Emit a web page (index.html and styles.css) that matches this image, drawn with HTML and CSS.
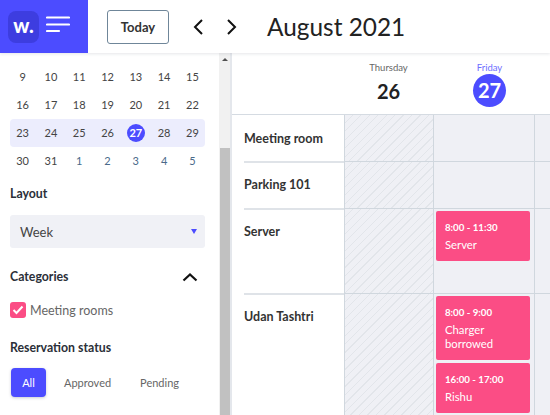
FILE: index.html
```html
<!DOCTYPE html>
<html lang="en">
<head>
    <meta charset="UTF-8">
    <title>Calendar</title>
    <link rel="stylesheet" href="styles.css">
</head>
<body>
    <header class="topbar">
        <div class="brand">
            <div class="logo">w.</div>
            <svg class="burger" width="24" height="18" viewBox="0 0 24 18">
                <path d="M1 1.500H23M1 8.500H23M1 15H13" stroke="#fff" stroke-width="2.200" stroke-linecap="round" fill="none"/>
            </svg>
        </div>
        <div class="topnav">
            <button class="today">Today</button>
            <svg class="arrow" width="12" height="18" viewBox="0 0 12 18"><path d="M10 2L3 9L10 16" stroke="#111" stroke-width="2" fill="none"/></svg>
            <svg class="arrow" width="12" height="18" viewBox="0 0 12 18"><path d="M2 2L9 9L2 16" stroke="#111" stroke-width="2" fill="none"/></svg>
            <h1 class="month">August 2021</h1>
        </div>
    </header>

    <div class="main">
        <aside class="sidebar">
            <div class="side-content">
                <div class="cal-row">
                    <span>9</span><span>10</span><span>11</span><span>12</span><span>13</span><span>14</span><span>15</span>
                </div>
                <div class="cal-row">
                    <span>16</span><span>17</span><span>18</span><span>19</span><span>20</span><span>21</span><span>22</span>
                </div>
                <div class="cal-row current">
                    <span>23</span><span>24</span><span>25</span><span>26</span><span><b class="today-dot">27</b></span><span>28</span><span>29</span>
                </div>
                <div class="cal-row">
                    <span>30</span><span>31</span><span class="next">1</span><span class="next">2</span><span class="next">3</span><span class="next">4</span><span class="next">5</span>
                </div>

                <h3 class="side-title layout-title">Layout</h3>
                <div class="select">
                    <span>Week</span>
                    <i class="caret"></i>
                </div>

                <div class="cat-head">
                    <h3 class="side-title">Categories</h3>
                    <svg width="16" height="10" viewBox="0 0 16 10"><path d="M1.500 8.500L8 2.500L14.500 8.500" stroke="#111" stroke-width="2.200" fill="none"/></svg>
                </div>
                <div class="check-row">
                    <span class="check">
                        <svg width="12" height="10" viewBox="0 0 12 10"><path d="M1.500 5L4.500 8L10.500 1.500" stroke="#fff" stroke-width="2" fill="none"/></svg>
                    </span>
                    Meeting rooms
                </div>

                <h3 class="side-title status-title">Reservation status</h3>
                <div class="tabs">
                    <span class="tab active">All</span>
                    <span class="tab">Approved</span>
                    <span class="tab">Pending</span>
                </div>
            </div>
            <div class="scrollbar">
                <div class="scroll-up"></div>
                <div class="scroll-thumb"></div>
            </div>
        </aside>

        <section class="schedule">
            <div class="days">
                <div class="corner"></div>
                <div class="day">
                    <small>Thursday</small>
                    <strong>26</strong>
                </div>
                <div class="day friday">
                    <small>Friday</small>
                    <strong>27</strong>
                </div>
                <div class="day-rest"></div>
            </div>

            <div class="row row-first">
                <div class="room">Meeting room</div>
                <div class="cell hatched"></div>
                <div class="cell"></div>
                <div class="cell rest"></div>
            </div>
            <div class="row row-s">
                <div class="room">Parking 101</div>
                <div class="cell hatched"></div>
                <div class="cell"></div>
                <div class="cell rest"></div>
            </div>
            <div class="row row-m">
                <div class="room">Server</div>
                <div class="cell hatched"></div>
                <div class="cell">
                    <div class="event ev-server">
                        <b>8:00 - 11:30</b>
                        <p>Server</p>
                    </div>
                </div>
                <div class="cell rest"></div>
            </div>
            <div class="row row-l">
                <div class="room">Udan Tashtri</div>
                <div class="cell hatched"></div>
                <div class="cell">
                    <div class="event ev-charger">
                        <b>8:00 - 9:00</b>
                        <p>Charger borrowed</p>
                    </div>
                    <div class="event ev-rishu">
                        <b>16:00 - 17:00</b>
                        <p>Rishu</p>
                    </div>
                </div>
                <div class="cell rest"></div>
            </div>
        </section>
    </div>
</body>
</html>
```

FILE: styles.css
```css
* {
    box-sizing: border-box;
}
html, body {
    margin: 0;
    height: 100%;
    overflow: hidden;
}
body {
    font-family: "Lato", "Open Sans", sans-serif;
    color: #2b2f38;
    background: #fff;
}
h1, h3, p {
    margin: 0;
}

/* top bar */
.topbar {
    display: flex;
    height: 53px;
    box-shadow: 0 1px 3px rgba(40, 50, 70, 0.12);
    position: relative;
    z-index: 2;
    background: #fff;
}
.brand {
    width: 88px;
    background: #4c4cff;
    display: flex;
    align-items: center;
    padding-left: 8px;
    gap: 7px;
}
.logo {
    width: 31px;
    height: 32px;
    border-radius: 8px;
    background: #3d3de0;
    color: #fff;
    font-weight: 900;
    font-size: 20px;
    display: flex;
    align-items: center;
    justify-content: center;
    padding-bottom: 3px;
}
.burger {
    margin-bottom: 3px;
}
.topnav {
    display: flex;
    align-items: center;
    padding-left: 19px;
}
.today {
    width: 62px;
    height: 34px;
    background: #fff;
    border: 1px solid #6f8699;
    border-radius: 3px;
    font: 700 13px "Lato", sans-serif;
    color: #333;
    margin-right: 23px;
}
.arrow {
    margin-right: 22px;
}
.month {
    font-weight: 400;
    font-size: 24.400px;
    color: #222;
    margin-left: 7px;
}

.main {
    display: flex;
    height: 362px;
}

/* sidebar */
.sidebar {
    width: 232px;
    display: flex;
    flex: none;
    border-right: 2px solid #e4e7ec;
}
.side-content {
    width: 218px;
    padding: 10px 13px 0 10px;
    flex: none;
}
.cal-row {
    display: grid;
    grid-template-columns: repeat(7, 28.300px);
    justify-content: center;
    height: 28px;
    padding-bottom: 1px;
    align-items: center;
    text-align: center;
    font-size: 11px;
    color: #444;
}
.cal-row.current {
    background: #ecedfd;
    border-radius: 4px;
}
.next {
    color: #4a6a8a;
}
.today-dot {
    display: inline-block;
    width: 18px;
    height: 18px;
    line-height: 18px;
    border-radius: 50%;
    background: #4c4cff;
    color: #fff;
    font-weight: 700;
}
.side-title {
    font-size: 12.300px;
    font-weight: 700;
    color: #2b2f38;
}
.layout-title {
    margin-top: 11px;
}
.select {
    height: 33px;
    margin-top: 14px;
    background: #f0f1f6;
    border-radius: 3px;
    display: flex;
    align-items: center;
    justify-content: space-between;
    padding: 0 8px 0 10px;
    font-size: 13px;
    color: #444;
}
.caret {
    width: 0;
    height: 0;
    border-left: 3px solid transparent;
    border-right: 3px solid transparent;
    border-top: 5px solid #4c4cff;
}
.cat-head {
    display: flex;
    justify-content: space-between;
    align-items: center;
    margin-top: 21px;
    padding-right: 7px;
}
.check-row {
    display: flex;
    align-items: center;
    gap: 4px;
    margin-top: 18px;
    font-size: 12.500px;
    color: #666;
}
.check {
    width: 16px;
    height: 16px;
    border-radius: 3px;
    background: #fb4d85;
    display: flex;
    align-items: center;
    justify-content: center;
}
.status-title {
    margin-top: 22px;
}
.tabs {
    display: flex;
    align-items: center;
    margin-top: 13px;
    padding-left: 1px;
    font-size: 11px;
    color: #666;
}
.tab {
    padding: 0 10px;
    margin-right: 9px;
}
.tab.active {
    width: 35px;
    height: 29px;
    padding: 0;
    margin-right: 8px;
    background: #4c4cff;
    color: #fff;
    border-radius: 4px;
    box-shadow: 0 1px 3px rgba(40, 50, 70, 0.25);
    display: flex;
    align-items: center;
    justify-content: center;
}

/* fake scrollbar */
.scrollbar {
    width: 12px;
    margin-left: 1px;
    background: #f1f1f1;
    position: relative;
}
.scroll-up {
    width: 0;
    height: 0;
    margin: 5px auto 0;
    border-left: 3px solid transparent;
    border-right: 3px solid transparent;
    border-bottom: 3px solid #505050;
}
.scroll-thumb {
    position: absolute;
    top: 95px;
    left: 1px;
    width: 10px;
    bottom: 0;
    background: #c1c1c1;
}

/* schedule */
.schedule {
    flex: 1;
    overflow: hidden;
}
.days, .row {
    display: grid;
    grid-template-columns: 112px 89px 101px 1fr;
}
.days {
    height: 62px;
    border-bottom: 1px solid #d5dbe2;
}
.day {
    display: flex;
    flex-direction: column;
    align-items: center;
    padding-top: 9px;
}
.day small {
    font-size: 9.500px;
    color: #666;
    line-height: 12px;
}
.day strong {
    font-size: 20px;
    font-weight: 700;
    color: #222;
    line-height: 32px;
    margin-top: 1px;
}
.friday {
    padding-left: 12px;
}
.friday small {
    color: #6f6fff;
}
.friday strong {
    width: 33px;
    height: 33px;
    margin-top: 0;
    border-radius: 50%;
    background: #4c4cff;
    color: #fff;
    text-align: center;
    line-height: 33px;
}
.row-first { height: 46px; }
.row-s { height: 47px; }
.row-m { height: 85px; }
.row-l { height: 130px; }
.room {
    padding: 16px 0 0 12px;
    font-size: 12.500px;
    font-weight: 700;
    color: #333;
}
.row + .row .room {
    border-top: 2px solid #dfe3e8;
    margin-left: 12px;
    padding: 14px 0 0;
}
.cell {
    background-color: #eff0f5;
    border-left: 1px solid #d0d7de;
    border-top: 1px solid #d0d7de;
    padding: 2px 4px 2px 2px;
}
.row-first .cell {
    border-top: 0;
}
.hatched {
    background-image: repeating-linear-gradient(135deg, transparent 0, transparent 5px, #e2e5ea 5px, #e2e5ea 6px);
}
.event {
    background: #fb4d85;
    color: #fff;
    border-radius: 2px;
    padding: 9px;
    font-size: 11.300px;
    line-height: 14px;
    margin-bottom: 3px;
}
.event b {
    display: block;
    font-size: 9.700px;
    margin-bottom: 4px;
}
.ev-server { height: 50px; }
.ev-charger { height: 64px; }
.ev-rishu { height: 50px; }
```
